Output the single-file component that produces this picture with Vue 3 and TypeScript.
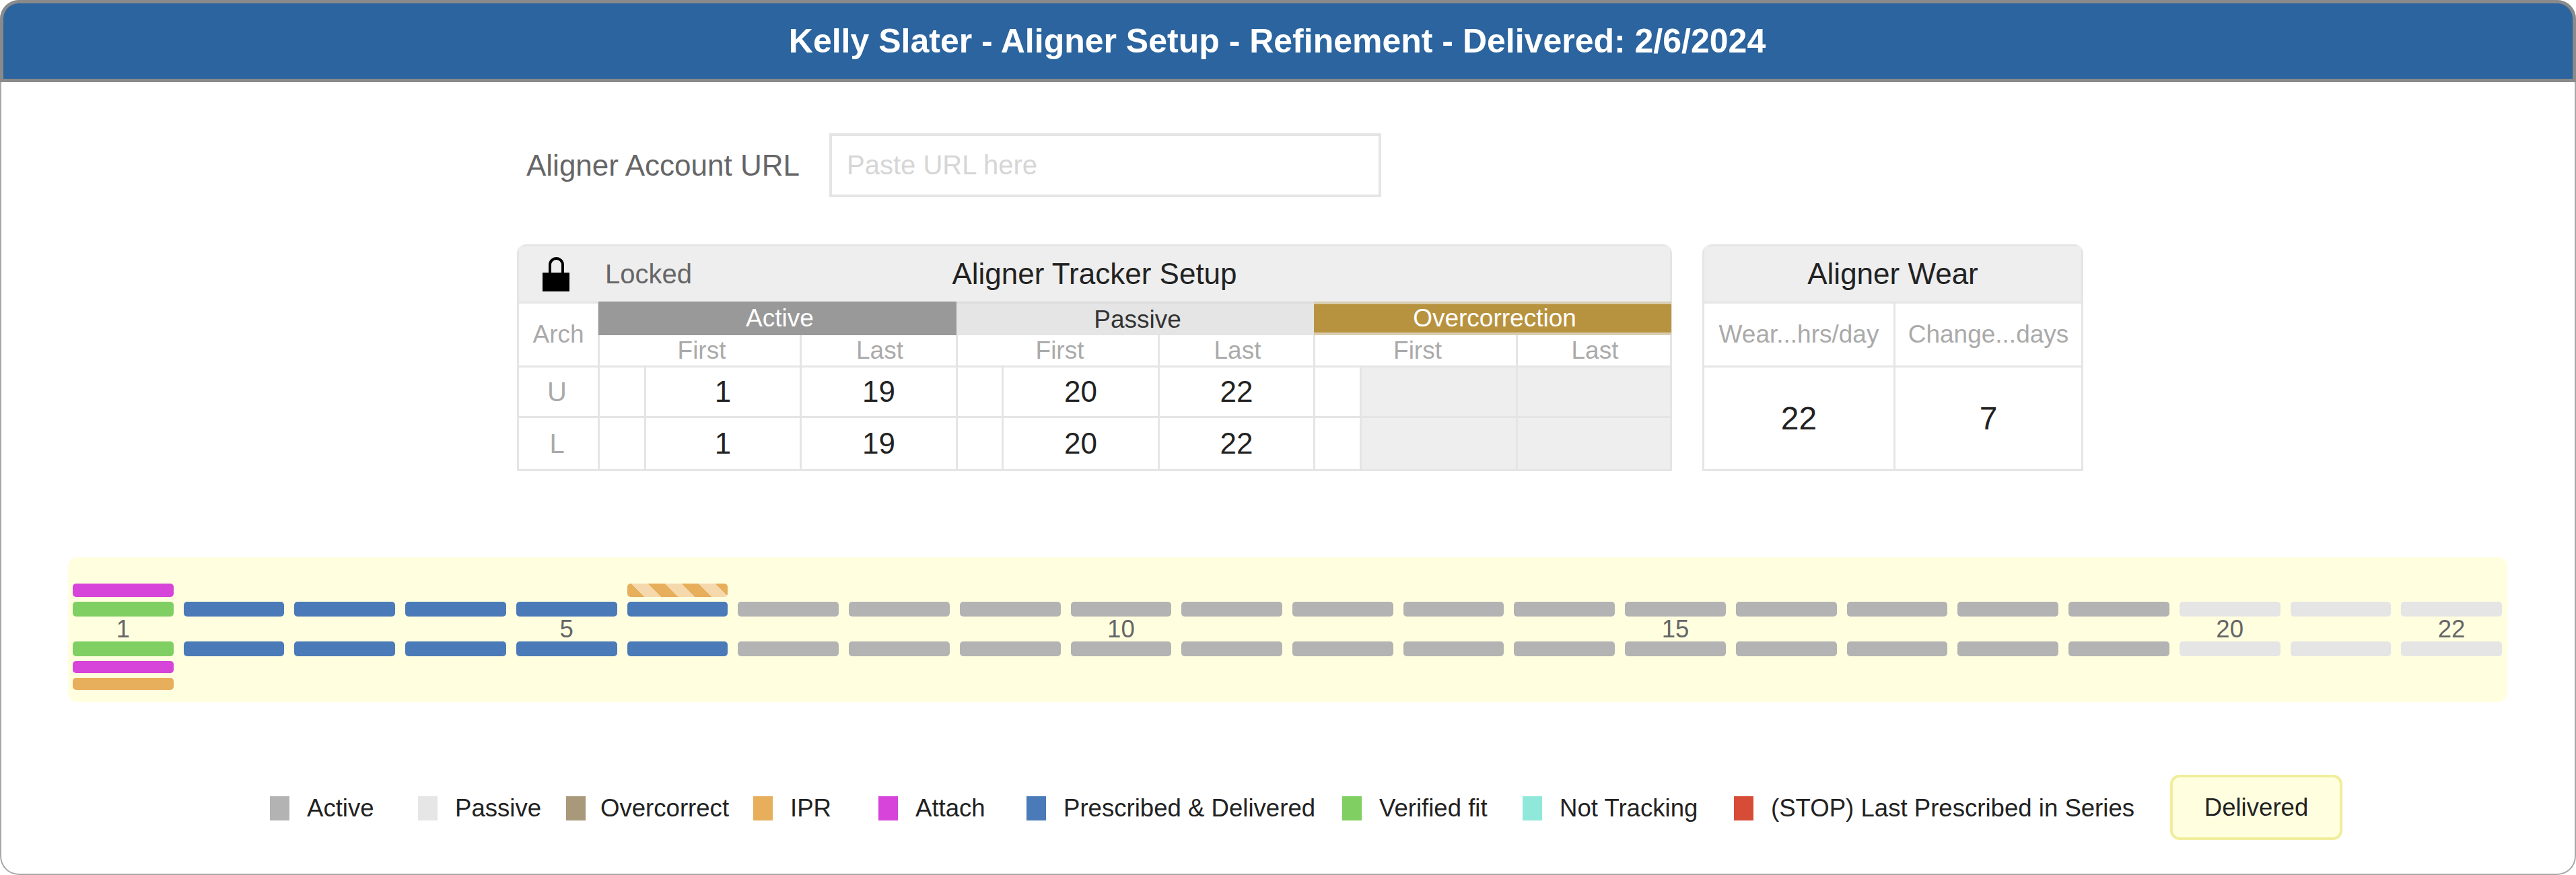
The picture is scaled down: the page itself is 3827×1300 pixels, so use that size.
<script setup lang="ts">
type Kind = 'verified' | 'delivered' | 'active' | 'passive'

interface Column {
  n: number
  kind: Kind
  label: string
  top: string
  below: string[]
}

const columns: Column[] = Array.from({ length: 22 }, (_, i) => {
  const n = i + 1
  const kind: Kind = n === 1 ? 'verified' : n <= 6 ? 'delivered' : n <= 19 ? 'active' : 'passive'
  return {
    n,
    kind,
    label: [1, 5, 10, 15, 20, 22].includes(n) ? String(n) : '',
    top: n === 1 ? 'attach' : n === 6 ? 'ipr-planned' : '',
    below: n === 1 ? ['attach', 'ipr'] : [],
  }
})

const legend = [
  { label: 'Active', color: '#b3b3b3' },
  { label: 'Passive', color: '#e6e6e6' },
  { label: 'Overcorrect', color: '#a8997b', tight: true },
  { label: 'IPR', color: '#e7ae5c' },
  { label: 'Attach', color: '#d644d9' },
  { label: 'Prescribed & Delivered', color: '#4a7ab8' },
  { label: 'Verified fit', color: '#7fcf63' },
  { label: 'Not Tracking', color: '#90e8da' },
  { label: '(STOP) Last Prescribed in Series', color: '#d64c36' },
]

const rows = [
  { arch: 'U', first: 1, last: 19, pFirst: 20, pLast: 22 },
  { arch: 'L', first: 1, last: 19, pFirst: 20, pLast: 22 },
]
</script>

<template>
  <div class="page">
    <header class="banner">Kelly Slater - Aligner Setup - Refinement - Delivered: 2/6/2024</header>

    <div class="url-row">
      <label class="url-label" for="url">Aligner Account URL</label>
      <input id="url" class="url-input" type="text" placeholder="Paste URL here" />
    </div>

    <section class="setup">
      <div class="card tracker">
        <div class="card-head tracker-head">
          <div class="lock-state">
            <svg class="lock" viewBox="0 0 40 51" aria-hidden="true">
              <path d="M11 24V11.5a9.5 9.5 0 0 1 19 0V24" fill="none" stroke="#000" stroke-width="4" />
              <rect x="0" y="23" width="40" height="28" fill="#000" />
            </svg>
            <span class="locked">Locked</span>
          </div>
          <span class="card-title">Aligner Tracker Setup</span>
        </div>

        <div class="cell muted arch-head">Arch</div>
        <div class="band band-active">Active</div>
        <div class="band band-passive">Passive</div>
        <div class="band band-over">Overcorrection</div>

        <div class="cell muted sub wide">First</div>
        <div class="cell muted sub">Last</div>
        <div class="cell muted sub wide">First</div>
        <div class="cell muted sub">Last</div>
        <div class="cell muted sub wide">First</div>
        <div class="cell muted sub">Last</div>

        <template v-for="row in rows" :key="row.arch">
          <div class="cell muted arch">{{ row.arch }}</div>
          <div class="cell"></div>
          <div class="cell num">{{ row.first }}</div>
          <div class="cell num">{{ row.last }}</div>
          <div class="cell"></div>
          <div class="cell num">{{ row.pFirst }}</div>
          <div class="cell num">{{ row.pLast }}</div>
          <div class="cell"></div>
          <div class="cell off"></div>
          <div class="cell off"></div>
        </template>
      </div>

      <div class="card wear">
        <div class="card-head wear-head"><span class="card-title">Aligner Wear</span></div>
        <div class="cell muted">Wear...hrs/day</div>
        <div class="cell muted">Change...days</div>
        <div class="cell big">22</div>
        <div class="cell big">7</div>
      </div>
    </section>

    <section class="timeline">
      <div v-for="col in columns" :key="col.n" class="col">
        <div class="marker-slot">
          <div v-if="col.top" class="marker" :class="col.top"></div>
        </div>
        <div class="bar" :class="col.kind"></div>
        <div class="col-label">{{ col.label }}</div>
        <div class="bar" :class="col.kind"></div>
        <div v-for="b in col.below" :key="b" class="marker below" :class="b"></div>
      </div>
    </section>

    <section class="legend">
      <div v-for="item in legend" :key="item.label" class="legend-item" :class="{ tight: item.tight }">
        <span class="swatch" :style="{ background: item.color }"></span>
        <span>{{ item.label }}</span>
      </div>
      <div class="delivered-box">Delivered</div>
    </section>
  </div>
</template>

<style>
html,
body {
  margin: 0;
  background: #fff;
}
</style>

<style scoped>
.page {
  box-sizing: border-box;
  width: 3827px;
  height: 1300px;
  border-radius: 28px;
  box-shadow: inset 0 0 0 2px #a8a8a8;
  font-family: 'Liberation Sans', Arial, sans-serif;
  color: #222;
  overflow: hidden;
}

.banner {
  box-sizing: border-box;
  height: 122px;
  padding-right: 32px;
  display: flex;
  align-items: center;
  justify-content: center;
  background: #2b649e;
  border: 5px solid #8a8a8a;
  border-radius: 28px 28px 0 0;
  color: #fff;
  font-size: 50px;
  font-weight: 700;
}

.url-row {
  display: flex;
  align-items: center;
  gap: 44px;
  margin: 76px 0 0 782px;
}

.url-label {
  font-size: 44px;
  color: #666;
}

.url-input {
  box-sizing: border-box;
  width: 820px;
  height: 95px;
  padding: 0 22px;
  border: 4px solid #e5e5e5;
  outline: none;
  font-family: inherit;
  font-size: 40px;
  color: #222;
}

.url-input::placeholder {
  color: #d6d6d6;
  opacity: 1;
}

.setup {
  display: flex;
  gap: 45px;
  margin: 70px 0 0 768px;
}

.card {
  box-sizing: border-box;
  display: grid;
  gap: 3px;
  padding: 3px;
  background: #e5e5e5;
  border-radius: 14px 14px 0 0;
  overflow: hidden;
}

.tracker {
  width: 1716px;
  grid-template-columns: 117px 66px 228px 229px 65px 229px 228px 66px 229px 226px;
  grid-template-rows: 82px 44px 45px 72px 76px;
}

.wear {
  width: 566px;
  grid-template-columns: 281px 276px;
  grid-template-rows: 82px 92px 151px;
}

.card-head {
  background: #eee;
  display: grid;
  align-items: center;
  justify-items: center;
}

.tracker-head {
  grid-column: 1 / -1;
  grid-template-columns: 1fr auto 1fr;
}

.wear-head {
  grid-column: 1 / -1;
}

.card-title {
  font-size: 44px;
  color: #222;
}

.lock-state {
  justify-self: start;
  display: flex;
  align-items: center;
  gap: 53px;
  padding-left: 35px;
}

.lock {
  width: 40px;
  height: 51px;
  display: block;
}

.locked {
  font-size: 40px;
  color: #666;
}

.cell {
  display: flex;
  align-items: center;
  justify-content: center;
  background: #fff;
  font-size: 37px;
}

.muted {
  color: #aaa;
}

.arch-head {
  grid-row: span 2;
}

.arch {
  font-size: 40px;
  padding-right: 4px;
}

.band {
  display: flex;
  align-items: center;
  justify-content: center;
  grid-column: span 3;
  margin: -3px -2px;
  padding-left: 6px;
  font-size: 37px;
  box-sizing: border-box;
}

.band-active {
  background: #999;
  color: #fff;
}

.band-passive {
  background: #e5e5e5;
  color: #333;
  border-top: 3px solid #dcdcdc;
}

.band-over {
  background: #b8933f;
  color: #fff;
  border-top: 4px solid #d8cdb0;
  border-bottom: 4px solid #d8cdb0;
}

.wide {
  grid-column: span 2;
  padding-left: 6px;
}

.sub:not(.wide) {
  padding-left: 3px;
}

.num {
  font-size: 44px;
  color: #222;
}

.big {
  font-size: 48px;
  color: #222;
}

.off {
  background: #eee;
}

.timeline {
  box-sizing: border-box;
  width: 3624px;
  height: 215px;
  margin: 128px 0 0 101px;
  padding: 39px 8px 0 7px;
  display: grid;
  grid-template-columns: repeat(22, minmax(0, 1fr));
  column-gap: 15px;
  align-content: start;
  background: #ffffe0;
  border-radius: 14px;
}

.col {
  display: flex;
  flex-direction: column;
}

.marker-slot {
  height: 20px;
  margin-bottom: 7px;
}

.marker {
  height: 100%;
  border-radius: 5px;
}

.bar {
  height: 22px;
  border-radius: 5px;
}

.verified {
  background: #7fcf63;
}

.delivered {
  background: #4a7ab8;
}

.active {
  background: #b3b3b3;
}

.passive {
  background: #e5e5e5;
}

.attach {
  background: #d644d9;
}

.ipr {
  background: #e7ae5c;
}

.ipr-planned {
  background: repeating-linear-gradient(45deg, #e7ae5c 0 17.7px, #f5d9ac 17.7px 35.4px);
}

.below {
  height: 18px;
  margin-top: 7px;
}

.col-label {
  height: 37px;
  line-height: 37px;
  text-align: center;
  font-size: 36.6px;
  color: #666;
}

.legend {
  display: grid;
  grid-template-columns: 220px 220px 278px 186px 220px 469px 268px 314px 648px 256px;
  align-items: center;
  margin: 108px 0 0 401px;
  font-size: 36.6px;
  color: #222;
}

.legend-item {
  display: flex;
  align-items: center;
  gap: 26px;
  padding-top: 3px;
}

.legend-item.tight {
  gap: 22px;
}

.swatch {
  width: 29px;
  height: 36px;
}

.delivered-box {
  box-sizing: border-box;
  height: 97px;
  display: flex;
  align-items: center;
  justify-content: center;
  background: #ffffe0;
  border: 4px solid #f0ee9c;
  border-radius: 14px;
  color: #222;
}
</style>
